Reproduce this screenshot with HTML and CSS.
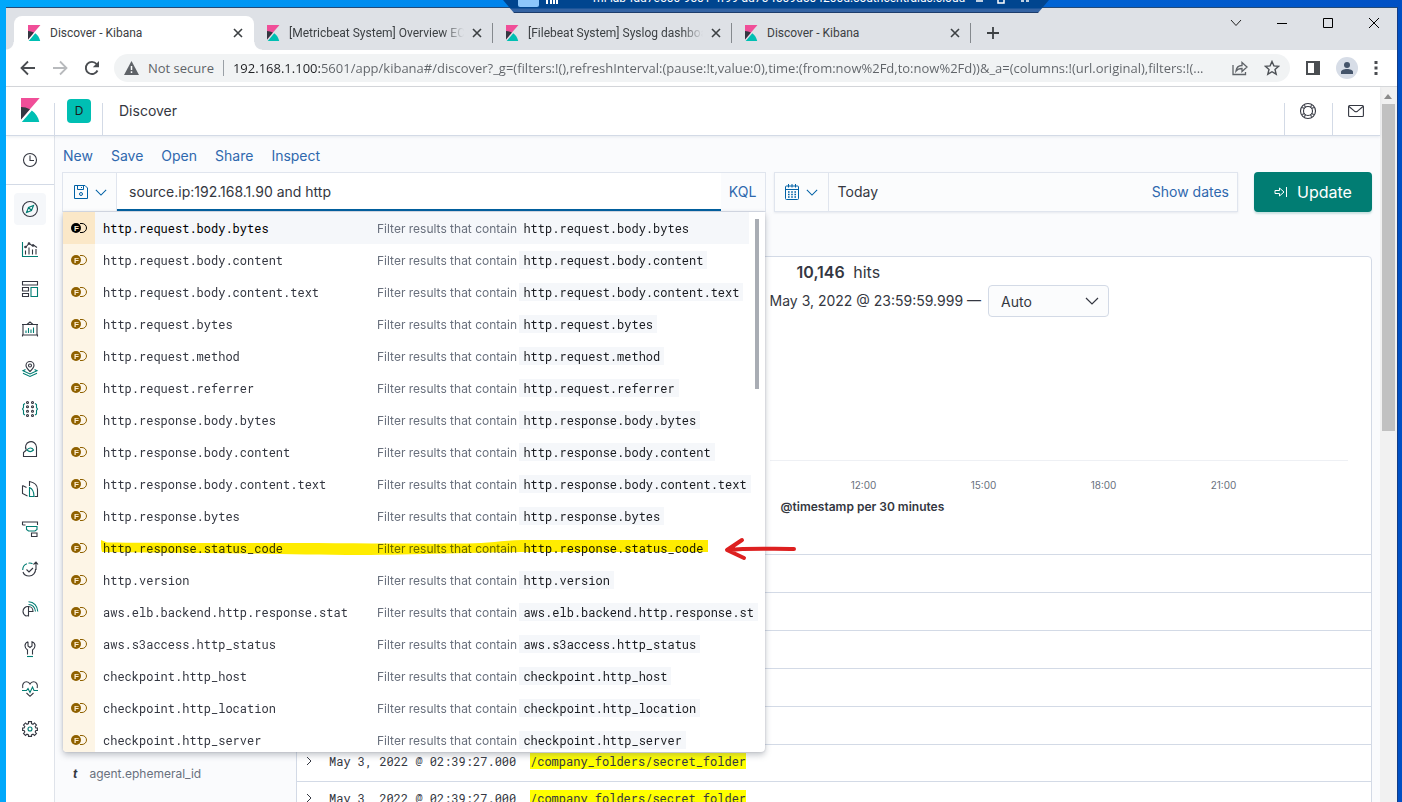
FILE: index.html
```html
<!DOCTYPE html>
<html lang="en">
<head>
<meta charset="utf-8">
<title>Discover - Kibana</title>
<link rel="stylesheet" href="styles.css">
</head>
<body>
<svg class="defs" aria-hidden="true">
  <symbol id="kibana" viewBox="0 0 32 32">
    <path fill="#f04e98" d="M4 0v28.789L28.935.017z"/>
    <path fill="#343741" d="M4 12v16.789l11.906-13.738A24.721 24.721 0 004 12"/>
    <path fill="#00bfb3" d="M18.479 16.664L6.268 30.754l-1.073 1.237h23.191c-1.252-6.292-4.883-11.719-9.908-15.327"/>
  </symbol>
  <symbol id="cross" viewBox="0 0 10 10"><path d="M1 1l8 8M9 1L1 9" fill="none" stroke="currentColor" stroke-width="1.6"/></symbol>
  <symbol id="chevron" viewBox="0 0 14 8"><path d="M1 1l6 6 6-6" fill="none" stroke="currentColor" stroke-width="1.2"/></symbol>
  <symbol id="field" viewBox="0 0 16 12">
    <circle cx="5" cy="6" r="5" fill="currentColor"/>
    <path d="M9 1.500h2a4.500 4.500 0 010 9H9" fill="none" stroke="currentColor"/>
    <text x="3" y="9" class="field-letter">F</text>
  </symbol>
</svg>

<div class="desktop">
  <div class="remote-bar">
    <span class="remote-pin"></span>
    <svg class="remote-signal" width="12" height="5" viewBox="0 0 12 5"><path d="M1 0v4M5 0v4M8 0v4M11 0v4" stroke="#fff" stroke-width="2"/></svg>
    <span class="remote-name">rhi-lab-fad7e500-9501-4f99-ad75-f509d504200d.southcentralus.cloud…</span>
    <svg class="remote-actions" width="56" height="4" viewBox="0 0 56 4"><path d="M1 1h7M23 0v3h6V0M46 1h3M51 1h3" fill="none" stroke="#fff" stroke-width="1.500"/></svg>
  </div>

  <div class="window">
    <div class="tabstrip">
      <div class="tab tab-active"><svg class="fav"><use href="#kibana"/></svg><span class="tab-title">Discover - Kibana</span><button class="tab-close" aria-label="Close tab"><svg width="10" height="10"><use href="#cross"/></svg></button></div>
      <div class="tab tab-line"><svg class="fav"><use href="#kibana"/></svg><span class="tab-title fade">[Metricbeat System] Overview ECS</span><button class="tab-close" aria-label="Close tab"><svg width="10" height="10"><use href="#cross"/></svg></button></div>
      <div class="tab tab-line"><svg class="fav"><use href="#kibana"/></svg><span class="tab-title fade">[Filebeat System] Syslog dashboard</span><button class="tab-close" aria-label="Close tab"><svg width="10" height="10"><use href="#cross"/></svg></button></div>
      <div class="tab tab-line"><svg class="fav"><use href="#kibana"/></svg><span class="tab-title">Discover - Kibana</span><button class="tab-close" aria-label="Close tab"><svg width="10" height="10"><use href="#cross"/></svg></button></div>
      <button class="tab-new" aria-label="New tab"><svg width="12" height="12" viewBox="0 0 12 12"><path d="M6 0v12M0 6h12" stroke="#3c4043" stroke-width="1.800"/></svg></button>
      <div class="window-buttons">
        <button aria-label="Search tabs"><svg width="12" height="12" viewBox="0 0 12 12"><path d="M1 3l5 5.500L11 3" fill="none" stroke="#222"/></svg></button>
        <button aria-label="Minimize"><svg width="10" height="10" viewBox="0 0 10 10"><path d="M0 5.500h10" stroke="#000"/></svg></button>
        <button aria-label="Maximize"><svg width="10" height="10" viewBox="0 0 10 10"><path d="M.5.5h9v9h-9z" fill="none" stroke="#000"/></svg></button>
        <button aria-label="Close window"><svg width="10" height="10" viewBox="0 0 10 10"><path d="M0 0l10 10M10 0L0 10" stroke="#000"/></svg></button>
      </div>
    </div>

    <div class="toolbar">
      <button aria-label="Back"><svg width="16" height="16" viewBox="0 0 16 16"><path d="M15 8H2M8 1.500L1.500 8 8 14.500" fill="none" stroke="#4a4d51" stroke-width="1.800"/></svg></button>
      <button aria-label="Forward"><svg width="16" height="16" viewBox="0 0 16 16"><path d="M1 8h13M8 1.500L14.500 8 8 14.500" fill="none" stroke="#b8babd" stroke-width="1.800"/></svg></button>
      <button aria-label="Reload"><svg width="16" height="16" viewBox="0 0 16 16"><path d="M13.500 10.500A6.100 6.100 0 1112.600 4" fill="none" stroke="#4a4d51" stroke-width="1.900"/><path d="M15 1v6.200H8.800z" fill="#4a4d51"/></svg></button>
      <div class="omnibox">
        <svg width="15" height="14" viewBox="0 0 15 14"><path d="M7.500 0L15 14H0z" fill="#5f6368"/><path d="M7.500 5v4M7.500 10.200v1.800" stroke="#fff" stroke-width="1.500"/></svg>
        <span class="insecure">Not secure</span>
        <input class="url" aria-label="Address" value="192.168.1.100:5601/app/kibana#/discover?_g=(filters:!(),refreshInterval:(pause:!t,value:0),time:(from:now%2Fd,to:now%2Fd))&amp;_a=(columns:!(url.original),filters:!(...">
        <button aria-label="Share"><svg width="16" height="16" viewBox="0 0 16 16"><path d="M1 5v9.500h12.500V12M4 11c.5-4 3-5.500 6-5.500V2.500l5 4.500-5 4.500v-3c-3 0-4.500.5-6 2.500z" fill="none" stroke="#5f6368" stroke-width="1.300"/></svg></button>
        <button aria-label="Bookmark"><svg width="16" height="16" viewBox="0 0 16 16"><path d="M8 1.500l1.900 4.400 4.800.4L11 9.500l1.200 4.700L8 11.700l-4.200 2.500L5 9.500 1.300 6.300l4.800-.4z" fill="none" stroke="#4d5156" stroke-width="1.400"/></svg></button>
      </div>
      <button aria-label="Side panel"><svg width="14" height="14" viewBox="0 0 14 14"><path d="M1 1h12v12H1z" fill="none" stroke="#4a4d51" stroke-width="2"/><path d="M8 1h5v12H8z" fill="#4a4d51"/></svg></button>
      <button class="profile" aria-label="Profile"><svg width="12" height="12" viewBox="0 0 12 12"><circle cx="6" cy="3" r="3" fill="#44546a"/><path d="M0 12V10c0-2 3-3 6-3s6 1 6 3v2z" fill="#44546a"/></svg></button>
      <button class="more" aria-label="Menu"><svg width="4" height="14" viewBox="0 0 4 14"><path d="M2 0v3M2 5.500v3M2 11v3" stroke="#4a4d51" stroke-width="3"/></svg></button>
    </div>

    <div class="viewport">
      <div class="app">
        <header class="header">
          <a class="brand" href="#" aria-label="Home"><svg width="24" height="24"><use href="#kibana"/></svg></a>
          <button class="space"><span>D</span></button>
          <span class="crumb">Discover</span>
          <button class="header-btn" aria-label="Help"><svg width="18" height="18" viewBox="0 0 18 18" fill="none" stroke="#343741" stroke-width="1.100"><circle cx="9" cy="9" r="7.500"/><circle cx="9" cy="9" r="4.500"/><path d="M3.200 5.500l2.300 1M5.500 3.200l1 2.300M14.800 5.500l-2.300 1M12.500 3.200l-1 2.300M3.200 12.500l2.300-1M5.500 14.800l1-2.300M14.800 12.500l-2.300-1M12.500 14.800l-1-2.300"/></svg></button>
          <button class="header-btn" aria-label="Newsfeed"><svg width="16" height="16" viewBox="0 0 16 16" fill="none" stroke="#343741" stroke-width="1.100"><rect x=".6" y="2.500" width="14.800" height="11" rx="1"/><path d="M1 3.500l5.500 4.700c1 .8 2 .8 3 0L15 3.500"/></svg></button>
        </header>

        <div class="body">
          <nav class="rail">
            <a class="recent" href="#" aria-label="Recently viewed"><svg viewBox="0 0 16 16"><circle cx="8" cy="8" r="6.500"/><path d="M8 3.500v5h4"/></svg></a>
            <a class="active" href="#" aria-label="Discover"><svg viewBox="0 0 16 16"><circle cx="8" cy="8" r="7.500"/><path class="t" d="M11.500 4.500L9.500 9.500l-5 2 2-5zM6.500 6.500l3 3"/></svg></a>
            <a href="#" aria-label="Visualize"><svg viewBox="0 0 16 16"><path class="t" d="M.5 1v14.500H16"/><path d="M3.500 9.500v4M7 6.500v7M10.500 8.500v5M14 8v5.500M3.500 6.500L7 2.500l3 2 1.500-.5L15 6.500"/><circle cx="3.500" cy="6" r=".8"/><circle cx="7" cy="2.500" r=".8"/><circle cx="11" cy="4.500" r=".8"/></svg></a>
            <a href="#" aria-label="Dashboard"><svg viewBox="0 0 16 16"><path d="M.5.5h15v3.500H.5zM.5 6.500h6V10h-6zM.5 12.500h6v3h-6z"/><path class="t" d="M9 6.500h6.500v9H9z"/></svg></a>
            <a href="#" aria-label="Canvas"><svg viewBox="0 0 16 16"><path d="M1 3.500h14V14H1zM5 3.500L8 1l3 2.500M0 3.500h2M14 3.500h2M.5 13.500v2M15.500 13.500v2M0 14h16"/><path class="t" d="M4 9.500v2.500M6.500 7v5M9 8.500V12M11.500 6.500V12"/></svg></a>
            <a href="#" aria-label="Maps"><svg viewBox="0 0 16 16"><path d="M8 10.500C5 7.500 4 6.500 4 4.500a4 4 0 018 0c0 2-1 3-4 6z"/><circle cx="8" cy="4.500" r="1.500"/><path class="t" d="M3.500 8.500L1 9.700l7 3.300 7-3.300-2.500-1.200M1 12.200l7 3.300 7-3.300"/></svg></a>
            <a href="#" aria-label="Machine Learning"><svg viewBox="0 0 16 16"><circle cx="5.500" cy="1.500" r="1"/><circle cx="10.500" cy="1.500" r="1"/><circle cx="5.500" cy="5.800" r="1"/><circle cx="10.500" cy="5.800" r="1"/><circle cx="5.500" cy="10.200" r="1"/><circle cx="10.500" cy="10.200" r="1"/><circle cx="5.500" cy="14.500" r="1"/><circle cx="10.500" cy="14.500" r="1"/><path class="t" d="M3 2.500L1.500 3.500v3L.5 8l1 1.500v3.500L3 14M13 2.500l1.500 1v3l1 1.500-1 1.500v3.500L13 14"/></svg></a>
            <a href="#" aria-label="Metrics"><svg viewBox="0 0 16 16"><path d="M4.300 9A5.500 5.500 0 1114.500 6v9.500H1.500v-4L4.500 9"/><path class="t" d="M5 9c1.500-2.500 5-3 6.500 0-2 2-4.500 2-6.500 0z"/></svg></a>
            <a href="#" aria-label="Logs"><svg viewBox="0 0 16 16"><path d="M.5 4.500v8l5 2.500M.5 4.500l4 2M7.500 5V.5c5 1 8 3.500 8 8V15.500h-3"/><path class="t" d="M7.500 6.500c3.500 1.500 4.500 4 4.500 9H7.500z"/></svg></a>
            <a href="#" aria-label="APM"><svg viewBox="0 0 16 16"><path d="M.5 4V1h15v3M9.500 11.500v4h5.500v-3.500h-5M.5 4h3"/><path class="t" d="M4.500 5.500H15v3l-2 1.500H6.500l-2-1.500z"/></svg></a>
            <a href="#" aria-label="Uptime"><svg viewBox="0 0 16 16"><path d="M13.500 8A6.300 6.300 0 017 15C4.500 15 1.800 13.500 1 11M14 9V1M11.500 3.500L14 1l2 2.500M4.500 8.500L7 11l4-4"/><path class="t" d="M.7 9C.7 6 2.500 3.500 5 2.700M6.500 2.200c1.500-.3 3 0 4 .6"/></svg></a>
            <a href="#" aria-label="SIEM"><svg viewBox="0 0 16 16"><path d="M6.500 15.500V5.500A5 5 0 001 10.500c0 2 1.500 3.700 3 4.500l2.500-.5M6.500 5.500c2.500 0 4.500 2 4.500 5H6.500"/><path class="t" d="M6.500 3.500c4 .2 6.500 3 7 7M6.500.7c5.500.2 9 4.300 9.300 9.800"/></svg></a>
            <a href="#" aria-label="Dev Tools"><svg viewBox="0 0 16 16"><path d="M6 .8C4 1.500 3 3 3 4.800 3 6.500 4 8 5.500 9v4.500M10.500 13.500V9C12 8 13 6.500 13 4.800 13 3 12 1.500 10 .8V5L8 6.500 6 5V.8"/><path class="t" d="M5 15.500h6"/></svg></a>
            <a href="#" aria-label="Stack Monitoring"><svg viewBox="0 0 16 16"><path d="M.8 7C-.2 3 2 .8 4.500.8 6.500.8 7.500 2 8 3 8.500 2 9.500.8 11.500.8 14 .8 16.200 3 15.200 7M4.500 12L8 15.300l3.500-3.300"/><path class="t" d="M0 9.500h4.500L6 7.500l2 4L10.500 6 12 9.500h4"/></svg></a>
            <a href="#" aria-label="Management"><svg viewBox="0 0 16 16"><path d="M6.500.6h3v2l1.500.7 1.500-1.400 2 2.100-1.300 1.500.7 1.500h1.500v2.500h-1.500l-.7 1.500 1.300 1.500-2 2-1.500-1.300-1.500.7v1.500h-3v-1.500L5 13.200l-1.500 1.300-2-2L2.800 11l-.7-1.500H.6V7h1.500l.7-1.500L1.500 4l2-2.100L5 3.300l1.500-.7z"/><circle class="t" cx="8" cy="8" r="2"/></svg></a>
          </nav>

          <main class="main">
            <div class="menu"><a href="#">New</a><a href="#">Save</a><a href="#">Open</a><a href="#">Share</a><a href="#">Inspect</a></div>

            <div class="search-row">
              <div class="query">
                <button class="prepend" aria-label="Saved queries">
                  <svg width="16" height="16" viewBox="0 0 16 16" fill="none" stroke="currentColor"><path d="M1.500 1.500h10.500l2.500 2.500v10.500h-13z"/><path d="M4.500 1.500v4h6v-4M8.500 3v1"/><circle cx="8" cy="10" r="1.500"/></svg>
                  <svg width="12" height="7"><use href="#chevron"/></svg>
                </button>
                <input class="query-input" aria-label="Search query" value="source.ip:192.168.1.90 and http">
                <button class="kql">KQL</button>

                <div class="suggest">
                  <ul class="suggest-list">
                    <li class="item selected"><span class="kind"><svg><use href="#field"/></svg></span><span class="name">http.request.body.bytes</span><span class="desc">Filter results that contain <code>http.request.body.bytes</code></span></li>
                    <li class="item"><span class="kind"><svg><use href="#field"/></svg></span><span class="name">http.request.body.content</span><span class="desc">Filter results that contain <code>http.request.body.content</code></span></li>
                    <li class="item"><span class="kind"><svg><use href="#field"/></svg></span><span class="name">http.request.body.content.text</span><span class="desc">Filter results that contain <code>http.request.body.content.text</code></span></li>
                    <li class="item"><span class="kind"><svg><use href="#field"/></svg></span><span class="name">http.request.bytes</span><span class="desc">Filter results that contain <code>http.request.bytes</code></span></li>
                    <li class="item"><span class="kind"><svg><use href="#field"/></svg></span><span class="name">http.request.method</span><span class="desc">Filter results that contain <code>http.request.method</code></span></li>
                    <li class="item"><span class="kind"><svg><use href="#field"/></svg></span><span class="name">http.request.referrer</span><span class="desc">Filter results that contain <code>http.request.referrer</code></span></li>
                    <li class="item"><span class="kind"><svg><use href="#field"/></svg></span><span class="name">http.response.body.bytes</span><span class="desc">Filter results that contain <code>http.response.body.bytes</code></span></li>
                    <li class="item"><span class="kind"><svg><use href="#field"/></svg></span><span class="name">http.response.body.content</span><span class="desc">Filter results that contain <code>http.response.body.content</code></span></li>
                    <li class="item"><span class="kind"><svg><use href="#field"/></svg></span><span class="name">http.response.body.content.text</span><span class="desc">Filter results that contain <code>http.response.body.content.text</code></span></li>
                    <li class="item"><span class="kind"><svg><use href="#field"/></svg></span><span class="name">http.response.bytes</span><span class="desc">Filter results that contain <code>http.response.bytes</code></span></li>
                    <li class="item marked"><span class="kind"><svg><use href="#field"/></svg></span><span class="name">http.response.status_code</span><span class="desc">Filter results that contain <code>http.response.status_code</code></span>
                      <svg class="marker" width="612" height="20" viewBox="0 0 612 20"><path fill="#ffec00" d="M0 4l6 2.500c50 .5 120 .5 170 .5 70 0 120 1 190 .5 20 0 35-3 55-3.500h186v12H430c-50 0-120 3-170 3-40 0-70-1-110-1.500L1 16C0 13 0 8 0 4z"/></svg>
                      <svg class="arrow" width="74" height="26" viewBox="0 0 74 26"><path d="M19 4L4 14l17 8M5 14c20-2 40-1 66-1" fill="none" stroke="#dd2020" stroke-width="4" stroke-linecap="round" stroke-linejoin="round"/></svg>
                    </li>
                    <li class="item"><span class="kind"><svg><use href="#field"/></svg></span><span class="name">http.version</span><span class="desc">Filter results that contain <code>http.version</code></span></li>
                    <li class="item"><span class="kind"><svg><use href="#field"/></svg></span><span class="name">aws.elb.backend.http.response.stat</span><span class="desc">Filter results that contain <code>aws.elb.backend.http.response.st</code></span></li>
                    <li class="item"><span class="kind"><svg><use href="#field"/></svg></span><span class="name">aws.s3access.http_status</span><span class="desc">Filter results that contain <code>aws.s3access.http_status</code></span></li>
                    <li class="item"><span class="kind"><svg><use href="#field"/></svg></span><span class="name">checkpoint.http_host</span><span class="desc">Filter results that contain <code>checkpoint.http_host</code></span></li>
                    <li class="item"><span class="kind"><svg><use href="#field"/></svg></span><span class="name">checkpoint.http_location</span><span class="desc">Filter results that contain <code>checkpoint.http_location</code></span></li>
                    <li class="item last"><span class="kind"><svg><use href="#field"/></svg></span><span class="name">checkpoint.http_server</span><span class="desc">Filter results that contain <code>checkpoint.http_server</code></span></li>
                  </ul>
                  <div class="suggest-scroll"></div>
                </div>
              </div>

              <div class="dates">
                <button class="prepend cal" aria-label="Quick dates">
                  <svg width="16" height="16" viewBox="0 0 16 16" fill="none" stroke="currentColor"><rect x="1.500" y="2" width="13" height="13.500" rx="1"/><path d="M1.500 5.500h13M4.500 0v3.500M8 0v3.500M11.500 0v3.500"/><path d="M4 8h8M4 10.500h8M4 13h8" stroke-width="1.400" stroke-dasharray="1.600 1.600"/></svg>
                  <svg width="12" height="7"><use href="#chevron"/></svg>
                </button>
                <button class="today">Today</button>
                <button class="show-dates">Show dates</button>
              </div>

              <button class="update"><svg width="14" height="12" viewBox="0 0 14 12" fill="none" stroke="#fff"><path d="M1 4.500h4.500V2L10 6l-4.500 4V7.500H1zM12.500 1v10"/></svg>Update</button>
            </div>

            <div class="discover">
              <aside class="fields"><div class="field-row"><b>t</b><span>agent.ephemeral_id</span></div></aside>
              <section class="panel">
                <div class="summary">
                  <div class="hits"><strong>10,146</strong> hits</div>
                  <div class="range"><label for="interval">May 3, 2022 @ 23:59:59.999 —</label>
                    <span class="select"><select id="interval"><option>Auto</option></select><svg width="14" height="8"><use href="#chevron"/></svg></span>
                  </div>
                  <div class="chart"></div>
                  <div class="ticks"><span>12:00</span><span>15:00</span><span>18:00</span><span>21:00</span></div>
                  <div class="axis-title">@timestamp per 30 minutes</div>
                </div>
                <table class="docs">
                  <tbody>
                    <tr><td></td><td></td><td></td></tr>
                    <tr><td></td><td></td><td></td></tr>
                    <tr><td></td><td></td><td></td></tr>
                    <tr><td></td><td></td><td></td></tr>
                    <tr><td></td><td></td><td></td></tr>
                    <tr class="doc"><td><button aria-label="Expand"><svg width="6" height="10" viewBox="0 0 6 10"><path d="M1 1l4 4-4 4" fill="none" stroke="#343741"/></svg></button></td><td>May 3, 2022 @ 02:39:27.000</td><td><mark>/company_folders/secret_folder</mark></td></tr>
                    <tr class="doc"><td><button aria-label="Expand"><svg width="6" height="10" viewBox="0 0 6 10"><path d="M1 1l4 4-4 4" fill="none" stroke="#343741"/></svg></button></td><td>May 3, 2022 @ 02:39:27.000</td><td><mark>/company_folders/secret_folder</mark></td></tr>
                  </tbody>
                </table>
              </section>
            </div>
          </main>
        </div>
      </div>
      <div class="scrollbar"><svg width="8" height="5" viewBox="0 0 8 5"><path d="M0 5l4-5 4 5z" fill="#8b8b8b"/></svg><div class="thumb"></div></div>
    </div>
  </div>
</div>
</body>
</html>
```

FILE: styles.css
```css
* { box-sizing: border-box; }
body { margin: 0; font-family: Inter, "Liberation Sans", sans-serif; font-size: 14px; color: #343741; overflow: hidden; }
button, input, select { font: inherit; color: inherit; border: 0; padding: 0; background: none; outline: 0; border-radius: 0; }
button { display: flex; align-items: center; justify-content: center; }
a { text-decoration: none; color: inherit; }
svg { display: block; flex: none; }
.defs { position: absolute; width: 0; height: 0; }

.desktop { position: relative; height: 100vh; padding: 7px 4px 0 6px; overflow: hidden; background: linear-gradient(90deg, #00a8fb, #0084ec 35%, #0068d8 70%, #0050c4); }
.remote-bar { position: absolute; z-index: 5; top: 0; left: 503px; width: 546px; height: 13px; display: flex; align-items: flex-start; padding-left: 15px; overflow: hidden; color: #fff; font-family: Roboto, sans-serif; font-size: 12px; background: linear-gradient(#00458f 8px, #3463a3 9px 12px, #1c3c6b 12px); clip-path: polygon(0 0, 100% 0, 535px 100%, 11px 100%); }
.remote-pin { width: 21px; height: 7px; margin-right: 7px; background: #8dc6fa; border-radius: 0 0 2px 2px; }
.remote-name { width: 373px; margin: -10px 9px 0 35px; line-height: 17px; white-space: nowrap; overflow: hidden; }

.window { height: 100%; display: flex; flex-direction: column; background: #fff; border-top: 1px solid #234a78; border-right: 1px solid #123c86; font-family: Inter, sans-serif; }
.tabstrip { display: flex; height: 42px; flex: none; padding: 8px 0 0 8px; background: #dee1e6; font-family: Roboto, sans-serif; font-size: 12px; color: #3c4043; }
.tab { position: relative; display: flex; align-items: center; width: 239px; padding: 0 11px 0 12px; flex: none; }
.tab-active { width: 240px; background: #fff; border-radius: 8px 8px 0 0; }
.tab-active::before, .tab-active::after { content: ""; position: absolute; bottom: 0; width: 8px; height: 8px; }
.tab-active::before { left: -8px; background: radial-gradient(circle at 0 0, #dee1e6 7px, #fff 8px); }
.tab-active::after { right: -8px; background: radial-gradient(circle at 100% 0, #dee1e6 7px, #fff 8px); }
.tab-line { padding-left: 11px; background: linear-gradient(#85898e, #85898e) right center / 1px 20px no-repeat; }
.fav { width: 16px; height: 16px; margin-right: 8px; }
.tab-title { flex: 1; overflow: hidden; white-space: nowrap; margin-right: 8px; }
.fade { mask-image: linear-gradient(90deg, #000 88%, transparent); }
.tab-close { width: 10px; height: 34px; color: #3c4043; }
.tab-new { width: 44px; }
.window-buttons { display: flex; margin-left: auto; height: 14px; }
.window-buttons button { width: 46px; }

.toolbar { display: flex; align-items: center; flex: none; height: 37px; padding: 0 19px 1px 14px; gap: 16px; border-bottom: 1px solid #d5d7da; font-family: "Open Sans", sans-serif; font-size: 13px; }
.omnibox { flex: 1; min-width: 0; display: flex; align-items: center; height: 28px; margin: 0 0 0 -2px; padding: 0 10px; border-radius: 14px; background: #f1f3f4; }
.insecure { margin-left: 9px; padding-right: 9px; border-right: 1px solid #9aa0a6; line-height: 16px; color: #5f6368; white-space: nowrap; }
.url { flex: 1; min-width: 0; margin: 0 10px 0 9px; height: 26px; -webkit-text-fill-color: transparent; background: linear-gradient(90deg, #202124 88px, #5f6368 89px); background-clip: text; -webkit-background-clip: text; }
.omnibox button + button { margin-left: 16px; }
.profile { width: 22px; height: 22px; border-radius: 50%; background: #d7dde7; }

.viewport { display: flex; flex: 1; min-height: 0; }
.app { flex: 1; min-width: 0; display: flex; flex-direction: column; }
.scrollbar { width: 17px; padding: 7px 2px 0 2px; background: #f1f1f1; }
.scrollbar svg { margin: 0 auto 5px 2px; }
.thumb { height: 327px; background: #c1c1c1; }

.header { position: relative; z-index: 1; display: flex; flex: none; height: 49px; background: #fff; border-bottom: 1px solid #d3dae6; box-shadow: 0 1px 3px #98a2b333; }
.brand, .space, .header-btn { width: 48px; display: flex; align-items: center; justify-content: center; background: linear-gradient(#d3dae6, #d3dae6) right bottom / 1px 32px no-repeat; }
.brand { width: 49px; padding: 0 2px 2px 0; }
.space span { width: 24px; height: 24px; border-radius: 4px; background: #00bfb3; color: #1a1c21; font-size: 12px; line-height: 24px; }
.crumb { flex: 1; padding-left: 16px; line-height: 48px; }
.header-btn { background-position: left bottom; }

.body { display: flex; flex: 1; min-height: 0; }
.rail { width: 49px; flex: none; display: flex; flex-direction: column; align-items: center; gap: 8px; background: #fff; border-right: 1px solid #dfe3ea; }
.rail a { width: 32px; height: 32px; display: flex; align-items: center; justify-content: center; border-radius: 4px; }
.rail .recent { width: 100%; height: 49px; border-bottom: 1px solid #d3dae6; border-radius: 0; }
.rail .active { background: #f5f7fa; }
.rail svg { width: 16px; height: 16px; fill: none; stroke: #343741; stroke-width: 1.1; overflow: visible; }
.rail .t { stroke: #017d73; }

.main { flex: 1; min-width: 0; padding: 0 8px 0 7px; display: flex; flex-direction: column; background: #fafbfd; }
.menu { display: flex; gap: 18px; padding: 10px 1px 6px; line-height: 20px; color: #2f68ae; }
.search-row { display: flex; gap: 8px; height: 40px; margin-bottom: 44px; }
.query { position: relative; flex: 704; display: flex; border: 1px solid #e0e5ee; min-width: 0; }
.prepend { width: 54px; gap: 6px; color: #0061a6; border-right: 1px solid #e0e5ee; background: #fbfcfd; flex: none; }
.query-input { flex: 1; min-width: 0; padding: 0 12px 2px; background: #fff; box-shadow: inset 0 -2px #005f9e; }
.kql { width: 44px; padding-bottom: 2px; color: #2f68ae; }
.dates { flex: 464; display: flex; background: #fbfcfd; border: 1px solid #e0e5ee; box-shadow: 0 1px 2px #98a2b333; }
.today { flex: 1; justify-content: flex-start; padding: 0 0 2px 9px; }
.show-dates { padding: 0 8px 2px; color: #2f68ae; }
.update { width: 118px; margin-left: 8px; flex: none; gap: 9px; border-radius: 4px; background: #017d73; color: #fff; font-size: 16px; box-shadow: 0 2px 2px #017d7333; }

.suggest { position: absolute; z-index: 3; top: 39px; left: 0; width: 100%; height: 540px; background: #fff; border-radius: 0 0 4px 4px; box-shadow: 0 3px 6px #69707d66, 0 0 2px #69707d55; }
.suggest-list { list-style: none; margin: 0; padding: 0 16px 0 0; }
.item { display: flex; align-items: center; height: 32px; line-height: 18px; }
.item.last { height: 28px; }
.item.last .kind { border-radius: 0 0 0 4px; }
.item.last .name, .item.last .desc, .item.last svg { margin-top: 4px; }
.kind { width: 32px; align-self: stretch; display: flex; align-items: center; justify-content: center; background: #fdf5e6; color: #8f6100; flex: none; }
.kind svg { width: 16px; height: 12px; }
.field-letter { font: bold 8px "Liberation Sans", sans-serif; fill: #fdeed2; }
.name, code { font-family: "Roboto Mono", "Liberation Mono", monospace; font-size: 12px; }
.name { flex: 0 0 274px; padding-left: 8px; overflow: hidden; white-space: nowrap; }
.desc { flex: 1; min-width: 0; margin-left: 8px; color: #69707d; font-size: 12px; white-space: nowrap; }
code { display: inline-block; padding: 0 4px; margin-left: -1px; line-height: 18px; background: #f5f7fa; color: #1a1c21; }
.selected { background: #f5f7fa; }
.selected .name { color: #000; }
.selected .kind { background: #fbe8c8; color: #000; }
.marked { position: relative; }
.marked code { background: transparent; }
.marker { position: absolute; left: 38px; top: 4px; mix-blend-mode: multiply; }
.arrow { position: absolute; left: 660px; top: 4px; }
.suggest-scroll { position: absolute; top: 7px; right: 6px; width: 4px; height: 170px; background: #a9adb4; }

.discover { flex: 1; display: flex; min-height: 0; overflow: hidden; }
.fields { width: 234px; flex: none; padding-top: 508px; }
.field-row { display: flex; gap: 12px; padding-left: 11px; font-size: 12px; line-height: 20px; color: #69707d; }
.field-row b { font-style: italic; color: #343741; }
.panel { flex: 1; min-width: 0; height: 600px; background: #fff; border: 1px solid #d3dae6; border-radius: 4px 4px 0 0; }
.summary { height: 297px; padding-left: 44%; }
.hits { padding: 4px 27px 0; font-size: 16px; line-height: 23px; white-space: pre; }
.hits strong { font-weight: 600; margin-right: 4px; }
.range { display: flex; align-items: center; gap: 7px; height: 34px; white-space: nowrap; }
.range label { padding-bottom: 2px; }
.select { position: relative; width: 121px; height: 32px; }
.select select { width: 100%; height: 100%; padding-left: 12px; appearance: none; border: 1px solid #d3dae6; border-radius: 4px; background: #fbfcfd; }
.select svg { position: absolute; right: 10px; top: 12px; pointer-events: none; }
.chart { height: 143px; margin-right: 23px; border-bottom: 1px solid #eef0f4; }
.ticks { display: flex; padding: 14px 0 1px 34px; font-size: 10px; line-height: 20px; color: #69707d; }
.ticks span { width: 120px; text-align: center; }
.axis-title { padding-left: 11px; font-size: 12px; font-weight: 600; line-height: 22px; }
.docs { width: 100%; border-collapse: collapse; font-family: "Roboto Mono", "Liberation Mono", monospace; font-size: 12px; }
.docs td { height: 38px; padding: 0; border-top: 1px solid #d3dae6; line-height: 16px; white-space: nowrap; }
.docs .doc td { height: 37px; padding-bottom: 4px; }
.docs td:first-child { width: 32px; }
.docs td:nth-child(2) { width: 201px; }
.docs td button { width: 24px; }
mark { background: #ff0; color: inherit; display: inline-block; }
```
